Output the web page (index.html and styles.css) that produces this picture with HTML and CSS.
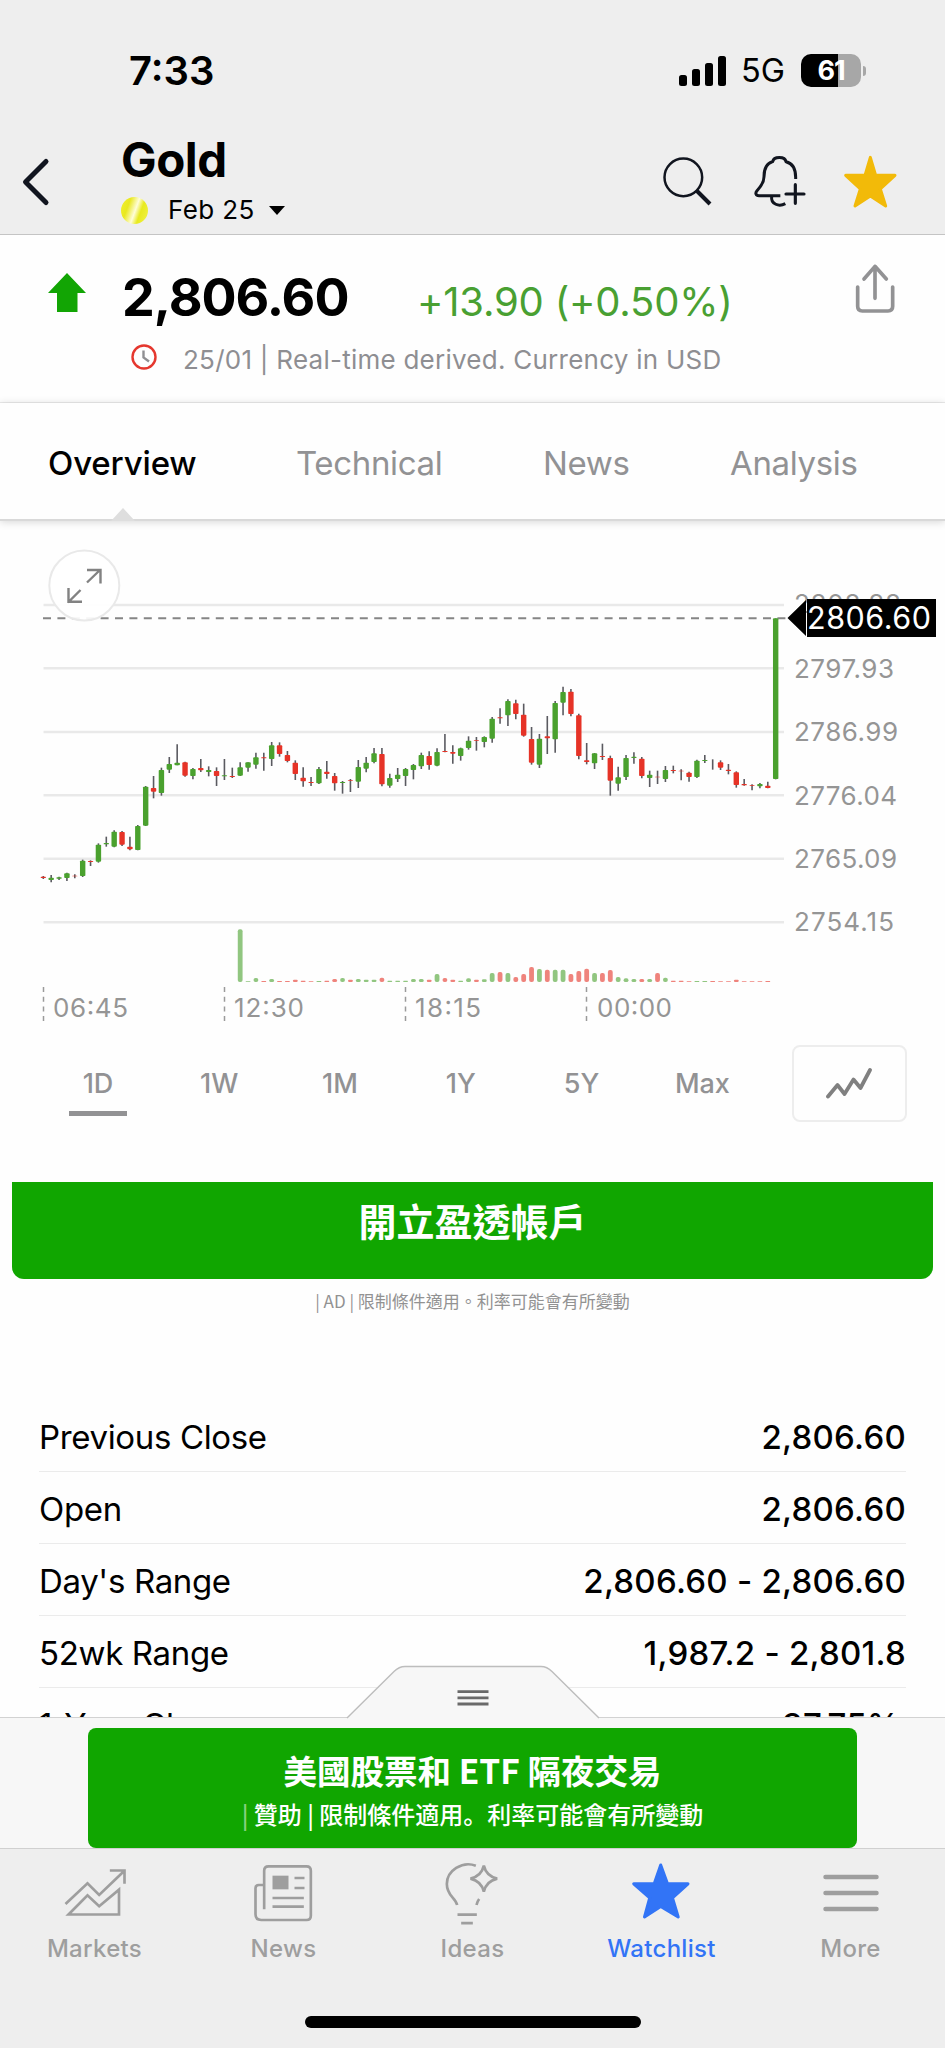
FILE: index.html
```html
<!DOCTYPE html>
<html lang="en">
<head>
<meta charset="utf-8">
<title>Gold</title>
<link rel="stylesheet" href="styles.css">
</head>
<body>
<div class="screen">
  <header class="header">
    <div class="status">
      <span class="time">7:33</span>
      <div class="status-right">
        <svg class="signal" viewBox="0 0 47 30"><rect x="0" y="19" width="8" height="11" rx="2.5"/><rect x="13" y="13" width="8" height="17" rx="2.5"/><rect x="26" y="7" width="8" height="23" rx="2.5"/><rect x="39" y="0" width="8" height="30" rx="2.5"/></svg>
        <span class="network">5G</span>
        <div class="battery"><span class="battery-level">61</span></div>
        <span class="battery-cap"></span>
      </div>
    </div>
    <div class="nav">
      <svg class="back" viewBox="0 0 30 50"><path d="M25 4.5 4.500 25 25 45.500"/></svg>
      <div class="titles">
        <h1 class="title">Gold</h1>
        <div class="contract"><span class="coin"></span><span class="month">Feb 25</span><span class="caret"></span></div>
      </div>
      <div class="actions">
        <svg class="action" viewBox="54 336 180 180"><circle cx="130" cy="412" r="56.500" stroke-width="7.500"/><path d="m171 453 39 39" stroke-width="12"/></svg>
        <svg class="action" viewBox="324 336 180 180"><path stroke-width="9" d="M418 467h-64c-10 0-12-8-6-15 14-15 21-25 21-42 0-24 8-40 26-45 3-17 37-17 40 0 22 5 30 22 29 52"/><path stroke-width="9" d="M392 469c-3 24 22 32 41 22"/><path stroke-width="9.500" stroke-linecap="round" d="M463 434v56M435 462h54"/></svg>
        <svg class="action action-star" viewBox="600 336 180 180"><path d="m691 352 16 54h58l-44 41 16 51-46-30-46 30 16-51-44-41h58z"/></svg>
      </div>
    </div>
  </header>

  <section class="quote">
    <div class="quote-row">
      <svg class="up" viewBox="0 0 38 39"><path d="M19 0 38 20H29.500V39H9V20H0z"/></svg>
      <span class="price">2,806.60</span>
      <span class="change">+13.90 (+0.50%)</span>
      <svg class="share" viewBox="615 660 180 180"><path d="M653 744v58q0 14 14 14h77q14 0 14-14v-58M705 778v-96M672 720l33-38 34 38"/></svg>
    </div>
    <div class="quote-meta">
      <svg class="clock" viewBox="0 0 28 28"><circle cx="14" cy="14" r="11.500"/><path d="M13.500 7.500V14.500L19 18.500"/></svg>
      <span class="meta-text">25/01 | Real-time derived. Currency in USD</span>
    </div>
  </section>

  <nav class="tabs">
    <span class="tab tab-on">Overview</span>
    <span class="tab">Technical</span>
    <span class="tab">News</span>
    <span class="tab">Analysis</span>
  </nav>

  <section class="chart">
    <svg class="plot" viewBox="0 521 945 510">
      <g class="grid"><path d="M43.500 605H784M43.500 668.300H784M43.500 732H784M43.500 795.300H784M43.500 858.700H784M43.500 922.300H784"/></g>
      <path class="last-line" d="M43 618.200H790"/>
      <g id="candles"></g>
      <g id="volumes"></g>
      <g class="label">
        <text x="794" y="613" textLength="107">2808.88</text>
        <text x="794" y="678" textLength="100">2797.93</text>
        <text x="794" y="741" textLength="104">2786.99</text>
        <text x="794" y="804.500" textLength="103">2776.04</text>
        <text x="794" y="868" textLength="103">2765.09</text>
        <text x="794" y="931" textLength="100">2754.15</text>
        <text x="53" y="1016.700" textLength="75">06:45</text>
        <text x="234" y="1016.700" textLength="70">12:30</text>
        <text x="415" y="1016.700" textLength="66">18:15</text>
        <text x="597" y="1016.700" textLength="75">00:00</text>
      </g>
      <path class="ticks" d="M43.500 987v34M224.500 987v34M405.500 987v34M586.500 987v34"/>
      <path class="flag" d="M787.500 618 806 600V636zM807 599H936V637H807z"/>
      <text class="flag-text" x="807" y="629" textLength="124">2806.60</text>
      <g class="expand"><circle cx="84.300" cy="585.500" r="35"/><path d="M87 582.500 100 570M87 570H100.500V583.500M80.500 590 68 602.500M68.500 588V601.700H82"/></g>
    </svg>
  </section>

  <div class="periods">
    <div class="period period-on">1D</div>
    <div class="period">1W</div>
    <div class="period">1M</div>
    <div class="period">1Y</div>
    <div class="period">5Y</div>
    <div class="period">Max</div>
    <div class="style-button"><svg class="style-icon" viewBox="0 0 46 32"><path d="M2 28.500 11.500 17 18.500 26 27.500 11.500 34.500 20 44 2"/></svg></div>
  </div>

  <div class="ad">
    <div class="ad-button">開立盈透帳戶</div>
    <div class="ad-note">| AD | 限制條件適用。利率可能會有所變動</div>
  </div>

  <div class="stats">
    <div class="stat"><span class="stat-name">Previous Close</span><span class="stat-value">2,806.60</span></div>
    <div class="stat"><span class="stat-name">Open</span><span class="stat-value">2,806.60</span></div>
    <div class="stat"><span class="stat-name">Day's Range</span><span class="stat-value">2,806.60 - 2,806.60</span></div>
    <div class="stat"><span class="stat-name">52wk Range</span><span class="stat-value">1,987.2 - 2,801.8</span></div>
    <div class="stat"><span class="stat-name">1-Year Change</span><span class="stat-value stat-percent">37.75%</span></div>
  </div>

  <div class="tray">
    <svg class="handle" viewBox="346 1664 254 55"><path class="handle-shape" d="M347 1718 394 1671.500Q399 1666.500 405 1666.500H541Q547 1666.500 552 1671.500L599 1718"/><path class="handle-lines" d="M457.500 1691.700H488.500M457.500 1697.900H488.500M457.500 1704H488.500"/></svg>
    <div class="sponsor">
      <div class="sponsor-title">美國股票和 ETF 隔夜交易</div>
      <div class="sponsor-note"><span class="faint">|</span> 贊助 | 限制條件適用。利率可能會有所變動</div>
    </div>
  </div>

  <footer class="bar">
    <div class="bar-items">
      <div class="item"><svg class="item-icon" viewBox="94.500 60 198 198"><path d="M105 192 171 130 206 165 281 93M238 91.500H282V131M114 223.500 171 166 206 199 265.500 149V223.500z"/></svg><span class="item-label">Markets</span></div>
      <div class="item"><svg class="item-icon" viewBox="661.500 60 198 198"><path d="M701 208V92q0-13 13-13H828q13 0 13 13V227q0 13-13 13H692q-17 0-17-17V145q0-10 10-10H698M726 174H820M726 200H820M792 114H822M792 144H822"/><path class="solid" d="M726 107H774V148H726z"/></svg><span class="item-label">News</span></div>
      <div class="item"><svg class="item-icon" viewBox="1228.500 60 198 198"><path d="M1336 77C1295 62 1249 92 1249 132 1249 168 1275 172 1280 195M1338 195Q1340 185 1346 177M1281 224H1339M1292 249.500H1327M1360 77Q1367 108 1400 116 1367 124 1360 155 1353 124 1320 116 1353 108 1360 77z"/></svg><span class="item-label">Ideas</span></div>
      <div class="item item-on"><svg class="item-icon" viewBox="628.500 1860 66 66"><path d="m660.200 1865 6.800 18.800h20.500l-15.500 14.200 5.700 19-17.500-10.500-16.200 10.500 5.200-19-16-14.200h20.500z"/></svg><span class="item-label">Watchlist</span></div>
      <div class="item"><svg class="item-icon" viewBox="816.500 1860 66 66"><path class="menu-lines" d="M824 1877H875M824 1893H875M824 1909H875"/></svg><span class="item-label">More</span></div>
    </div>
    <div class="home"></div>
  </footer>
</div>
<script src="chart.js"></script>
</body>
</html>
```
FILE: styles.css
```css
* { box-sizing: border-box; }
body { margin: 0; background: #fff; font-family: Inter, "Liberation Sans", sans-serif; color: #000; }
svg { display: block; flex: none; }
.screen { width: 945px; height: 2048px; overflow: hidden; display: flex; flex-direction: column; background: #fefefe; }
.screen > * { flex: none; }

.header { height: 235px; background: #eee; border-bottom: 1.500px solid #c4c4c4; }
.status { height: 141px; display: flex; justify-content: space-between; align-items: center; padding: 0 79px 0 129px; }
.time { font-size: 40px; font-weight: 600; letter-spacing: 0; }
.status-right { display: flex; align-items: center; }
.signal { width: 47px; height: 30px; }
.network { font-size: 32.500px; margin-left: 15px; width: 60px; letter-spacing: 0; }
.battery { width: 60px; height: 33px; border-radius: 10px; background: linear-gradient(90deg, #000 37px, #a7a7a7 37px); display: flex; align-items: center; justify-content: center; color: #fff; }
.battery-level { font-size: 27px; font-weight: 700; letter-spacing: -1px; }
.battery-cap { width: 3px; height: 10px; margin-left: 2px; border-radius: 0 4px 4px 0; background: #a7a7a7; }

.nav { display: flex; }
.back { width: 30px; height: 50px; margin: 16px 0 0 21px; fill: none; stroke: #11151f; stroke-width: 5; stroke-linecap: round; stroke-linejoin: round; }
.titles { width: 301px; margin-left: 70px; }
.title { margin: 0; font-size: 47.500px; line-height: 37px; font-weight: 700; letter-spacing: -0.500px; }
.contract { display: flex; align-items: center; height: 28px; margin-top: 18px; }
.coin { width: 27px; height: 27px; border-radius: 50%; background: linear-gradient(110deg, #f0ef2c 5%, #e9e820 28%, #fffdd8 52%, #e8ea1e 68%, #f2f24a 100%); }
.month { margin-left: 20px; font-size: 26px; line-height: 28px; letter-spacing: .4px; }
.caret { margin-left: 14px; border: 8px solid transparent; border-top: 9px solid #000; border-bottom: 0; }
.actions { display: flex; gap: 31px; margin: 11px 0 0 236px; }
.action { width: 60px; height: 60px; fill: none; stroke: #11151f; stroke-linejoin: round; }
.action-star path { fill: #f2ba09; stroke: #f2ba09; stroke-width: 9; }

.quote { height: 168px; padding: 32px 0 0 48px; border-bottom: 1.500px solid #ebebeb; }
.quote-row { display: flex; height: 60px; align-items: center; }
.up { width: 38px; height: 39px; margin-bottom: 10px; fill: #12a504; }
.price { width: 295px; margin-left: 36px; font-size: 52px; font-weight: 700; letter-spacing: -1px; white-space: nowrap; }
.change { width: 330px; margin-top: 9px; font-size: 40px; color: #49a032; letter-spacing: -0.200px; white-space: nowrap; }
.share { width: 60px; height: 60px; margin: -16px 0 0 98px; fill: none; stroke: #929294; stroke-width: 11; stroke-linecap: round; stroke-linejoin: round; }
.quote-meta { display: flex; align-items: center; height: 32px; margin-top: 16px; padding-left: 82px; }
.clock { width: 28px; height: 28px; margin-bottom: 4px; fill: none; stroke-width: 2.400; }
.clock circle { stroke: #e5372e; }
.clock path { stroke: #8f8f92; }
.meta-text { margin-left: 25px; font-size: 26px; letter-spacing: .25px; color: #8e8e92; white-space: nowrap; }

.tabs { position: relative; display: grid; grid-template-columns: 248px 247px 187px 1fr; height: 118px; padding: 44px 0 0 48px; border-bottom: 2px solid #d9d9d9; box-shadow: 0 1px 8px rgba(0, 0, 0, .16); z-index: 1; }
.tabs::after { content: ""; position: absolute; left: 111px; bottom: -2px; width: 24px; height: 13px; background: #dedede; clip-path: polygon(50% 0, 100% 100%, 0 100%); }
.tab { font-size: 33px; line-height: 32px; color: #929294; letter-spacing: -0.350px; white-space: nowrap; }
.tab-on { color: #000; font-weight: 500; letter-spacing: -0.150px; }

.chart { height: 510px; }
.plot { width: 945px; height: 510px; }
.grid path { fill: none; stroke: #e9e9e9; stroke-width: 2.500; }
.last-line { fill: none; stroke: #858585; stroke-width: 2; stroke-dasharray: 8 6.400; }
.wick { stroke: #5a5a60; stroke-width: 1.600; }
.rise { fill: #4aa12e; }
.fall { fill: #e63327; }
#volumes { opacity: .6; }
.label { font-size: 26px; fill: #959595; }
.ticks { fill: none; stroke: #9a9a9a; stroke-width: 1.500; stroke-dasharray: 5 4.700; }
.flag { fill: #000; }
.flag-text { font-size: 30.500px; fill: #fff; }
.expand circle { fill: #fff; fill-opacity: .92; stroke: #e9e9e9; stroke-width: 2; }
.expand path { fill: none; stroke: #828282; stroke-width: 2.400; }

.periods { display: grid; grid-template-columns: repeat(6, 120.800px) 114px; height: 151px; padding: 14px 0 0 38px; }
.period { height: 71px; line-height: 77px; text-align: center; font-size: 27px; font-weight: 500; color: #929294; }
.period-on { width: 58px; margin-left: 31px; border-bottom: 5px solid #929294; }
.style-button { width: 115px; height: 77px; margin-left: 29px; border: 2px solid #ededed; border-radius: 8px; display: flex; align-items: center; justify-content: center; }
.style-icon { width: 46px; height: 32px; fill: none; stroke: #808080; stroke-width: 3.800; stroke-linecap: round; stroke-linejoin: round; }

.ad { height: 218px; padding: 0 12px; text-align: center; }
.ad-button { height: 97px; border-radius: 0 0 12px 12px; background: #10a600; color: #fff; font: 700 38px/75px "Noto Sans CJK TC", sans-serif; }
.ad-note { margin-top: 9px; font: 400 17px/26px "Noto Sans CJK TC", sans-serif; color: #929292; }

.stats { height: 317px; padding: 0 39px; overflow: hidden; }
.stat { display: flex; justify-content: space-between; height: 72.100px; padding-top: 2px; line-height: 71px; border-bottom: 1.500px solid #ebebeb; font-size: 33px; white-space: nowrap; }
.stat-name { letter-spacing: -0.350px; }
.stat-value { font-weight: 500; letter-spacing: .25px; }
.stat-percent { padding-right: 6px; }

.tray { position: relative; height: 131px; padding: 10px 88px 0; background: #f7f7f7; border-top: 1.500px solid #d2d2d2; }
.handle { position: absolute; left: 346px; top: -54px; width: 254px; height: 55px; }
.handle-shape { fill: #f7f7f7; stroke: #bdbdbd; stroke-width: 1.400; }
.handle-lines { fill: none; stroke: #6a6a6a; stroke-width: 2.800; }
.sponsor { height: 120px; padding-top: 19px; border-radius: 8px; background: #10a600; color: #fff; text-align: center; font-family: "Noto Sans CJK JP", sans-serif; white-space: nowrap; }
.sponsor-title { font-size: 33.500px; line-height: 46px; font-weight: 700; }
.sponsor-note { font-size: 24px; line-height: 36px; font-weight: 500; margin-top: 3px; }
.faint { opacity: .5; }

.bar { height: 200px; background: #eee; border-top: 1.500px solid #d0d0d0; }
.bar-items { display: grid; grid-template-columns: repeat(5, 189px); padding-top: 11px; }
.item { display: flex; flex-direction: column; align-items: center; color: #9e9e9e; }
.item-icon { width: 66px; height: 66px; fill: none; stroke: currentColor; stroke-width: 8; }
.item .solid { fill: currentColor; stroke: none; }
.item-label { margin-top: 9px; font-size: 24px; line-height: 28px; font-weight: 500; letter-spacing: .3px; }
.item-on { color: #3274f6; }
.item-on .item-icon { fill: currentColor; stroke-width: 3; stroke-linejoin: round; }
.item .menu-lines { stroke-width: 4.500; stroke-linecap: round; }
.home { width: 336px; height: 12px; margin: 53px 0 0 305px; border-radius: 6px; background: #000; }
```
FILE: chart.js
```javascript
// Each candle: wick top, body top, body bottom, wick bottom, direction.
// Levels are in thirds of a pixel below the plot origin.
const candles = `1038 1040 1044 1047 r|1035 1043 1050 1057 g|1040 1042 1046 1050 g|1028 1030 1044 1053 g|1033 1037 1039 1045 r|989 992 1038 1041 g|991 993 996 1008 r|940 944 995 998 g|920 939 943 950 g|901 905 950 952 g|903 906 944 948 r|920 950 958 961 r|885 888 960 961 g|768 770 887 888 g|738 774 785 805 r|713 720 789 797 g|681 702 719 729 g|643 698 706 706 g|695 697 737 740 r|714 717 738 748 g|687 714 721 726 r|709 720 726 739 g|712 723 738 768 r|687 736 739 750 g|713 738 741 744 r|697 712 737 738 g|697 697 713 725 g|668 682 704 716 g|668 682 685 722 r|636 646 687 708 g|637 646 672 680 r|663 675 693 697 r|691 698 732 750 r|712 743 754 770 r|741 756 759 768 r|711 717 760 762 g|693 725 732 746 r|729 738 760 782 r|753 756 759 791 g|747 750 752 786 r|690 711 755 774 g|681 698 716 727 g|654 670 696 700 g|654 672 763 769 r|731 744 767 773 g|714 734 747 756 g|714 717 738 768 g|702 705 720 748 g|668 675 709 717 g|664 678 705 719 r|655 666 707 709 g|612 663 666 667 r|646 666 671 701 r|653 655 678 692 g|619 632 654 659 g|621 631 633 662 r|619 621 636 652 g|561 566 626 638 g|535 562 565 581 r|508 513 556 588 g|509 520 552 568 r|521 554 617 620 r|591 627 698 704 r|612 626 704 714 g|558 619 625 672 r|513 519 628 668 g|470 486 518 556 g|477 485 552 559 r|551 556 678 688 r|639 691 696 703 r|669 670 700 717 g|641 678 681 690 r|677 684 752 797 r|710 742 761 782 g|675 684 741 750 g|667 680 684 701 g|681 686 738 745 r|722 734 744 771 g|722 740 742 762 r|708 720 747 756 g|707 720 723 730 r|718 722 724 751 r|725 728 741 755 r|689 692 741 744 g|675 690 693 699 g|688 688 688 719 r|691 697 713 720 r|702 719 723 733 r|724 727 765 773 r|747 762 766 767 r|763 765 767 781 r|759 762 769 775 g|755 767 774 775 r|265 265 747 748 g`;

// Volume bar heights, starting at candle 25.
const volumes = "158g 2g 12g 3r 9g 3r 3r 7r 4r 2r 3g 4r 9r 12g 7r 9g 7g 7g 13r 4g 4g 4g 9g 9g 7r 24g 12r 7r 4g 11g 7r 8g 27g 30r 27g 15r 24r 45r 39g 37r 37g 37g 24r 33r 40r 27g 27r 36r 15g 11g 9g 9r 9g 27r 13g 4r 4r 2r 3g 3g 3r 2r 2r 7r 2r 2r 2r 3r";

const NS = "http://www.w3.org/2000/svg";
const xOf = (i) => 43.3 + i * 7.875;
const yOf = (v) => 530 + v / 3;
const tone = (d) => (d === "g" ? "rise" : "fall");

function add(parent, name, attrs) {
  const el = document.createElementNS(NS, name);
  for (const key in attrs) el.setAttribute(key, attrs[key]);
  parent.appendChild(el);
}

const candleLayer = document.getElementById("candles");
candles.split("|").forEach((row, i) => {
  const [high, top, bottom, low, dir] = row.split(" ");
  const x = xOf(i);
  add(candleLayer, "line", { class: "wick", x1: x, x2: x, y1: yOf(+high), y2: yOf(+low) });
  add(candleLayer, "rect", { class: tone(dir), x: x - 2.7, y: yOf(+top), width: 5.4, height: (bottom - top) / 3, rx: 0.8 });
});

const volumeLayer = document.getElementById("volumes");
volumes.split(" ").forEach((item, i) => {
  const h = parseInt(item, 10) / 3;
  add(volumeLayer, "rect", { class: tone(item.slice(-1)), x: xOf(i + 25) - 2.4, y: 982 - h, width: 4.8, height: h, rx: Math.min(2, h / 2) });
});
```
